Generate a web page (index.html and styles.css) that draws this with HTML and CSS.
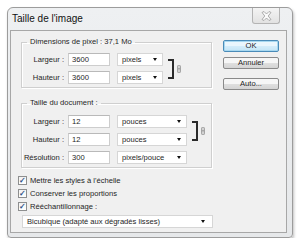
FILE: index.html
```html
<!DOCTYPE html>
<html lang="fr">
<head>
    <meta charset="UTF-8">
    <title>Taille de l'image</title>
    <link rel="stylesheet" href="styles.css">
</head>
<body>
    <div class="window">
        <div class="titlebar">
            <span class="title">Taille de l'image</span>
            <span class="close">
                <svg width="11" height="10" viewBox="0 0 11 10">
                    <path d="M1 1.5 L3 0.5 L5.5 3 L8 0.5 L10 1.5 L7.2 5 L10 8.5 L8 9.5 L5.5 7 L3 9.5 L1 8.5 L3.8 5 Z" fill="#fafafa" stroke="#9a9a9a" stroke-width="0.8"/>
                </svg>
            </span>
        </div>
        <div class="client">
            <div class="left">
                <fieldset class="group">
                    <legend>Dimensions de pixel : 37,1 Mo</legend>
                    <div class="linked">
                        <div class="rows">
                            <div class="row">
                                <label class="lbl">Largeur :</label>
                                <span class="field">3600</span>
                                <span class="select unit-px">pixels<i class="arrow"></i></span>
                            </div>
                            <div class="row">
                                <label class="lbl">Hauteur :</label>
                                <span class="field">3600</span>
                                <span class="select unit-px">pixels<i class="arrow"></i></span>
                            </div>
                        </div>
                        <span class="bracket"></span>
                        <svg class="chain" width="4" height="8" viewBox="0 0 4 8">
                            <rect x="0.4" y="0.4" width="3.2" height="3.8" rx="1.2" fill="#d2d2d2" stroke="#8e8e8e" stroke-width="0.8"/>
                            <rect x="0.4" y="3.8" width="3.2" height="3.8" rx="1.2" fill="#d2d2d2" stroke="#8e8e8e" stroke-width="0.8"/>
                        </svg>
                    </div>
                </fieldset>

                <fieldset class="group doc">
                    <legend>Taille du document :</legend>
                    <div class="linked">
                        <div class="rows">
                            <div class="row">
                                <label class="lbl">Largeur :</label>
                                <span class="field">12</span>
                                <span class="select unit-doc">pouces<i class="arrow"></i></span>
                            </div>
                            <div class="row">
                                <label class="lbl">Hauteur :</label>
                                <span class="field">12</span>
                                <span class="select unit-doc">pouces<i class="arrow"></i></span>
                            </div>
                        </div>
                        <span class="bracket"></span>
                        <svg class="chain" width="4" height="8" viewBox="0 0 4 8">
                            <rect x="0.4" y="0.4" width="3.2" height="3.8" rx="1.2" fill="#d2d2d2" stroke="#8e8e8e" stroke-width="0.8"/>
                            <rect x="0.4" y="3.8" width="3.2" height="3.8" rx="1.2" fill="#d2d2d2" stroke="#8e8e8e" stroke-width="0.8"/>
                        </svg>
                    </div>
                    <div class="row">
                        <label class="lbl">Résolution :</label>
                        <span class="field">300</span>
                        <span class="select unit-doc">pixels/pouce<i class="arrow"></i></span>
                    </div>
                </fieldset>

                <ul class="checks">
                    <li><span class="box">&#10003;</span>Mettre les styles à l'échelle</li>
                    <li><span class="box">&#10003;</span>Conserver les proportions</li>
                    <li><span class="box">&#10003;</span>Rééchantillonnage :</li>
                </ul>
                <span class="select method">Bicubique (adapté aux dégradés lisses)<i class="arrow"></i></span>
            </div>
            <div class="right">
                <span class="btn default">OK</span>
                <span class="btn">Annuler</span>
                <span class="btn auto">Auto...</span>
            </div>
        </div>
    </div>
</body>
</html>
```
FILE: styles.css
```css
*{
    margin: 0;
    padding: 0;
    box-sizing: border-box;
}
ul{
    list-style: none;
}
body{
    background: #fff;
    font-family: "Liberation Sans", Arial, sans-serif;
    font-size: 7.6px;
    color: #1e1e1e;
}
.window{
    margin: 7px 0 0 7px;
    width: 286px;
    height: 231px;
    border: 1px solid #9c9c9c;
    border-radius: 6px 6px 4px 4px;
    background: linear-gradient(#eef0f2, #e6e8ea);
    box-shadow: 1px 2px 3px rgba(0,0,0,.25);
    display: flex;
    flex-direction: column;
}
.titlebar{
    height: 22px;
    display: flex;
    justify-content: space-between;
    align-items: flex-start;
    padding-left: 4px;
}
.title{
    font-size: 10px;
    line-height: 22px;
    color: #111;
}
.close{
    width: 28px;
    height: 16px;
    margin-right: 12px;
    border: 1px solid #b4b4b4;
    border-top: none;
    border-radius: 0 0 3px 3px;
    background: linear-gradient(#f4f4f4, #e2e2e2);
    display: flex;
    align-items: center;
    justify-content: center;
}
.client{
    flex: 1;
    margin: 0 5px 4px 2px;
    border: 1px solid #a7a7a7;
    background: #f0f0f0;
    display: flex;
    padding: 6px 7px 0 10px;
    gap: 11px;
}
.left{
    width: 191px;
}
.group{
    border: 1px solid #cfcfcf;
    box-shadow: 1px 1px 0 #fff, inset 1px 1px 0 #fff;
    padding: 6px 0 3px 0;
}
.group legend{
    margin-left: 5px;
    padding: 0 3px;
    line-height: 10px;
}
.doc{
    margin-top: 10px;
    padding-top: 7px;
}
.linked{
    display: flex;
    align-items: center;
}
.rows{
    display: flex;
    flex-direction: column;
    gap: 5px;
}
.doc .linked{
    margin-bottom: 5px;
}
.row{
    display: flex;
    align-items: center;
    height: 13px;
}
.lbl{
    width: 42px;
    text-align: right;
}
.field{
    width: 42px;
    height: 13px;
    margin-left: 4px;
    border: 1px solid #cdcdcd;
    border-top-color: #b9b9b9;
    background: #fff;
    padding-left: 3px;
    line-height: 11px;
}
.select{
    display: flex;
    align-items: center;
    justify-content: space-between;
    height: 13px;
    margin-left: 7px;
    border: 1px solid #d6d6d6;
    background: #fff;
    padding: 0 5px 0 4px;
    line-height: 11px;
    white-space: nowrap;
    overflow: hidden;
}
.arrow{
    width: 0;
    height: 0;
    border-left: 2.5px solid transparent;
    border-right: 2.5px solid transparent;
    border-top: 3px solid #111;
    flex-shrink: 0;
}
.unit-px{
    width: 46px;
}
.unit-doc{
    width: 70px;
}
.bracket{
    width: 6px;
    height: 20px;
    margin-left: 5px;
    border: 2px solid #2a2a2a;
    border-left: none;
}
.chain{
    margin-left: 3px;
}
.checks{
    margin: 6px 0 0 -3px;
}
.checks li{
    display: flex;
    align-items: center;
    height: 13px;
}
.box{
    width: 9px;
    height: 9px;
    border: 1px solid #8e8f8f;
    background: linear-gradient(#f2f2f2, #fff);
    color: #2c4f86;
    font-size: 8px;
    line-height: 7px;
    text-align: center;
    font-weight: bold;
    margin-right: 3px;
}
.method{
    width: 191px;
    margin: 2px 0 0 1px;
    padding: 0 7px 0 4px;
}
.right{
    display: flex;
    flex-direction: column;
    width: 57px;
    padding-top: 3px;
}
.btn{
    height: 12px;
    border: 1px solid #8a8a8a;
    border-radius: 2px;
    background: linear-gradient(#f6f6f6 45%, #dedede 55%, #d4d4d4);
    text-align: center;
    line-height: 10px;
    margin-bottom: 5px;
}
.default{
    border-color: #4a8bb8;
    box-shadow: inset 0 0 0 1px #a8d8f0;
    background: linear-gradient(#eaf6fd 45%, #d3ecfa 55%, #c4e5f6);
}
.auto{
    margin-top: 4px;
}
```
